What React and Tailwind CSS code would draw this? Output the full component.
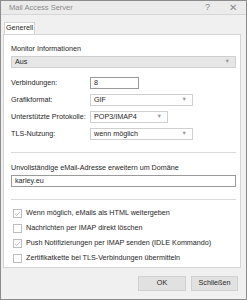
import { Check } from "lucide-react";

function Arrow() {
  return <span className="text-[5.5px] text-[#9a9a9a] leading-none">▼</span>;
}

function Select({ value, width, gray }) {
  return (
    <div
      className={`${width} h-[12px] flex items-center justify-between border pl-[3px] pr-[5px] ${
        gray ? "bg-[#e6e6e6] border-[#cfcfcf]" : "bg-white border-[#cfcfcf]"
      }`}
    >
      <span>{value}</span>
      <Arrow />
    </div>
  );
}

function Row({ label, children }) {
  return (
    <div className="flex items-center h-[12px]">
      <span className="w-[79px] shrink-0">{label}</span>
      {children}
    </div>
  );
}

function CheckRow({ label, checked }) {
  return (
    <div className="flex items-center h-[15px] pl-[2px]">
      <div className="w-[9px] h-[9px] border border-[#bdbdbd] bg-white flex items-center justify-center mr-[4px]">
        {checked && <Check className="w-[8px] h-[8px] text-[#a8a8a8]" strokeWidth={2.5} />}
      </div>
      <span>{label}</span>
    </div>
  );
}

export default function App() {
  return (
    <div
      className="w-[247px] h-[300px] bg-[#f0f0f0] border border-[#8c8c8c] flex flex-col text-[7.2px] text-[#262626]"
      style={{ fontFamily: '"Liberation Sans", Arial, sans-serif' }}
    >
      <div className="h-[14px] bg-[#ebebeb] border-b border-[#d6d6d6] flex items-center pl-[8px] pr-[9px] text-[#8a8a8a] text-[7.5px]">
        <span className="flex-1">Mail Access Server</span>
        <span className="text-[9px] mr-[19px]">?</span>
        <span className="text-[10px]">✕</span>
      </div>

      <div className="h-[7px]" />
      <div className="flex ml-[3px] h-[12px]">
        <div className="w-[31px] bg-white border border-b-0 border-[#d4d4d4] flex items-center justify-center">
          Generell
        </div>
      </div>

      <div className="ml-[2px] mr-[5px] h-[234px] bg-white border border-[#d4d4d4] pl-[7px] pr-[4px] flex flex-col">
        <div className="mt-[10px] h-[9px] flex items-center">Monitor Informationen</div>
        <div className="mt-[2px]">
          <Select value="Aus" width="w-full" gray />
        </div>

        <div className="mt-[9px] flex flex-col gap-[5px]">
          <Row label="Verbindungen:">
            <div className="w-[49px] h-[12px] border border-[#9a9a9a] bg-white flex items-center pl-[3px]">8</div>
          </Row>
          <Row label="Grafikformat:">
            <Select value="GIF" width="w-[103px]" />
          </Row>
          <Row label="Unterstützte Protokolle:">
            <Select value="POP3/IMAP4" width="w-[78px]" />
          </Row>
          <Row label="TLS-Nutzung:">
            <Select value="wenn möglich" width="w-[103px]" />
          </Row>
        </div>

        <div className="mt-[12px] h-px bg-[#d9d9d9]" />

        <div className="mt-[11px] h-[9px] flex items-center">Unvollständige eMail-Adresse erweitern um Domäne</div>
        <div className="mt-[2px] h-[12px] border border-[#9a9a9a] flex items-center pl-[3px]">karley.eu</div>

        <div className="mt-[12px] h-px bg-[#d9d9d9]" />

        <div className="mt-[6px] flex flex-col">
          <CheckRow label="Wenn möglich, eMails als HTML weitergeben" checked />
          <CheckRow label="Nachrichten per IMAP direkt löschen" />
          <CheckRow label="Push Notifizierungen per IMAP senden (IDLE Kommando)" checked />
          <CheckRow label="Zertifikatkette bei TLS-Verbindungen übermitteln" />
        </div>
      </div>

      <div className="flex-1 flex items-center justify-end pr-[8px] gap-[5px]">
        <div className="w-[48px] h-[15px] bg-[#e1e1e1] border border-[#d0d0d0] flex items-center justify-center">OK</div>
        <div className="w-[47px] h-[15px] bg-[#e1e1e1] border border-[#d0d0d0] flex items-center justify-center">Schließen</div>
      </div>
    </div>
  );
}
